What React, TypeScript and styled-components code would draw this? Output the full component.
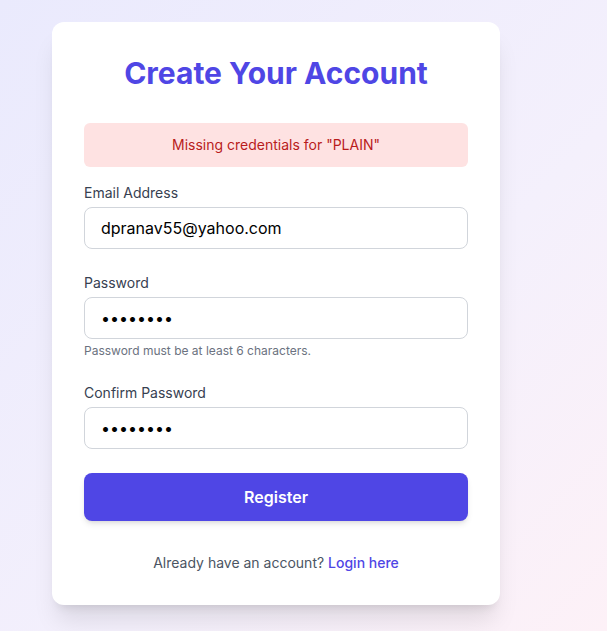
import React, { useState } from "react";
import styled, { createGlobalStyle } from "styled-components";

const GlobalStyle = createGlobalStyle`
  html, body {
    margin: 0;
    padding: 0;
  }
  body {
    font-family: Inter, "Noto Sans", sans-serif;
    background: linear-gradient(to bottom right, #eaeafd, #f4f0fc 60%, #fdf1f7);
    min-height: 100vh;
  }
`;

export default function App() {
  const [email, setEmail] = useState("dpranav55@yahoo.com");
  const [password, setPassword] = useState("password");
  const [confirm, setConfirm] = useState("password");

  return (
    <>
      <GlobalStyle />
      <Page>
        <Card>
          <Title>Create Your Account</Title>
          <ErrorBox>Missing credentials for "PLAIN"</ErrorBox>
          <Form onSubmit={(e) => e.preventDefault()}>
            <Field>
              <Label>Email Address</Label>
              <Input
                type="email"
                value={email}
                onChange={(e) => setEmail(e.target.value)}
              />
            </Field>
            <Field>
              <Label>Password</Label>
              <Input
                type="password"
                value={password}
                onChange={(e) => setPassword(e.target.value)}
              />
              <Hint>Password must be at least 6 characters.</Hint>
            </Field>
            <Field>
              <Label>Confirm Password</Label>
              <Input
                type="password"
                value={confirm}
                onChange={(e) => setConfirm(e.target.value)}
              />
            </Field>
            <SubmitButton type="submit">Register</SubmitButton>
          </Form>
          <Footer>
            Already have an account? <LoginLink href="#">Login here</LoginLink>
          </Footer>
        </Card>
      </Page>
    </>
  );
}

const Page = styled.div`
  min-height: 100vh;
  padding: 22px 0 0 52px;
  box-sizing: border-box;
`;

const Card = styled.div`
  width: 448px;
  box-sizing: border-box;
  padding: 33px 32px 32px;
  background: #ffffff;
  border-radius: 12px;
  box-shadow: 0 20px 25px -5px rgba(0, 0, 0, 0.1),
    0 8px 10px -6px rgba(0, 0, 0, 0.1);
`;

const Title = styled.h1`
  margin: 0 0 32px;
  font-size: 30px;
  line-height: 36px;
  font-weight: 700;
  color: #4f46e5;
  text-align: center;
`;

const ErrorBox = styled.div`
  background: #fee2e2;
  color: #b91c1c;
  font-size: 14px;
  line-height: 20px;
  padding: 12px 16px;
  border-radius: 6px;
  text-align: center;
  margin-bottom: 16px;
`;

const Form = styled.form`
  display: flex;
  flex-direction: column;
  gap: 24px;
`;

const Field = styled.div`
  display: flex;
  flex-direction: column;
`;

const Label = styled.label`
  font-size: 14px;
  line-height: 20px;
  font-weight: 400;
  color: #374151;
  margin-bottom: 4px;
`;

const Input = styled.input`
  height: 42px;
  box-sizing: border-box;
  padding: 0 16px;
  border: 1px solid #d1d5db;
  border-radius: 8px;
  font-family: Inter, "Noto Sans", sans-serif;
  font-size: 16px;
  color: #000000;
  background: #ffffff;
  outline: none;
`;

const Hint = styled.p`
  margin: 4px 0 0;
  font-size: 12px;
  line-height: 16px;
  color: #6b7280;
`;

const SubmitButton = styled.button`
  height: 48px;
  border: none;
  border-radius: 8px;
  background: #4f46e5;
  color: #ffffff;
  font-family: Inter, "Noto Sans", sans-serif;
  font-size: 16px;
  font-weight: 600;
  cursor: pointer;
  box-shadow: 0 4px 6px -1px rgba(0, 0, 0, 0.1),
    0 2px 4px -2px rgba(0, 0, 0, 0.1);
`;

const Footer = styled.p`
  margin: 32px 0 0;
  text-align: center;
  font-size: 14px;
  line-height: 20px;
  color: #4b5563;
`;

const LoginLink = styled.a`
  color: #4f46e5;
  font-weight: 500;
  text-decoration: none;
`;
